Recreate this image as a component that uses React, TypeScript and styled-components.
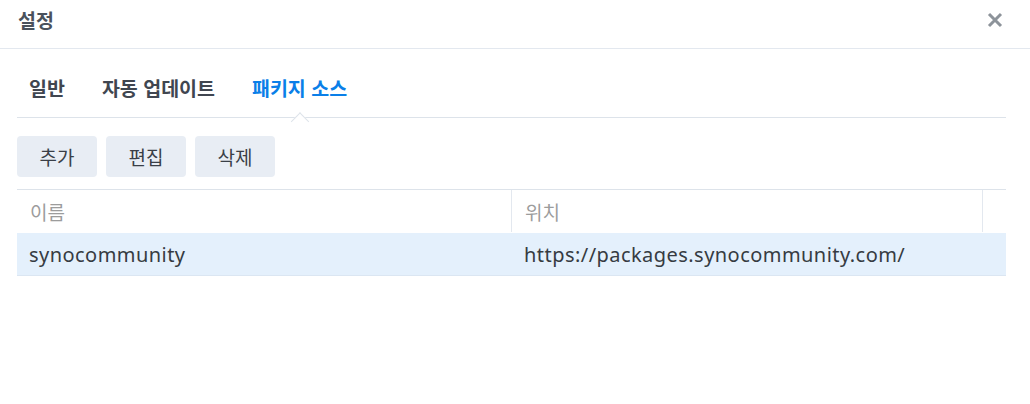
import React from "react";
import styled, { createGlobalStyle } from "styled-components";

const Global = createGlobalStyle`
  html, body { margin: 0; padding: 0; background: #fff; }
  body { font-family: "Noto Sans", "Noto Sans CJK KR", sans-serif; color: #333; }
`;

const Dialog = styled.div`
  width: 1030px;
  height: 404px;
  background: #fff;
  display: flex;
  flex-direction: column;
`;

const Header = styled.div`
  height: 49px;
  box-sizing: border-box;
  border-bottom: 1px solid #e3e8ef;
  display: flex;
  align-items: center;
  justify-content: space-between;
  padding: 0 27px 0 18px;
`;

const Title = styled.div`
  font-family: "Noto Sans CJK KR", sans-serif;
  font-size: 19.5px;
  font-weight: 700;
  color: #4a525c;
  margin-top: -9px;
`;

const CloseButton = styled.button`
  border: none;
  background: transparent;
  padding: 0;
  width: 16px;
  height: 16px;
  display: flex;
  cursor: pointer;
  margin-top: -9px;
`;

const Body = styled.div`
  padding: 0 24px 0 17px;
  display: flex;
  flex-direction: column;
`;

const TabBar = styled.div`
  display: flex;
  gap: 13px;
  height: 69px;
  box-sizing: border-box;
  border-bottom: 1px solid #dde3ea;
  padding-top: 19px;
`;

const Tab = styled.div<{ $active?: boolean }>`
  position: relative;
  padding: 0 12px;
  font-family: "Noto Sans CJK KR", sans-serif;
  font-size: 19.5px;
  font-weight: 700;
  line-height: 40px;
  word-spacing: 1px;
  color: ${(p) => (p.$active ? "#0a7fe8" : "#404650")};
`;

const Notch = styled.span`
  position: absolute;
  left: 50%;
  bottom: -10px;
  width: 13px;
  height: 13px;
  background: #fff;
  border-left: 1px solid #dde3ea;
  border-top: 1px solid #dde3ea;
  transform: translateX(-50%) translateY(1px) rotate(45deg);
  transform-origin: center;
  box-sizing: border-box;
`;

const Toolbar = styled.div`
  display: flex;
  gap: 9px;
  padding-top: 18px;
  padding-bottom: 12px;
`;

const Button = styled.button`
  width: 80px;
  height: 41px;
  border: none;
  border-radius: 4px;
  background: #e8edf4;
  font-family: "Noto Sans CJK KR", sans-serif;
  font-size: 19px;
  color: #3a3f47;
  padding: 0;
  cursor: pointer;
`;

const Table = styled.div`
  border-top: 1px solid #dde3ea;
  display: flex;
  flex-direction: column;
`;

const Row = styled.div<{ $selected?: boolean }>`
  display: grid;
  grid-template-columns: 495px 471px 1fr;
  height: 43px;
  box-sizing: border-box;
  background: ${(p) => (p.$selected ? "#e4f0fc" : "#fff")};
  border-bottom: 1px solid ${(p) => (p.$selected ? "#dbe6f2" : "transparent")};
`;

const HeadCell = styled.div<{ $divider?: boolean }>`
  display: flex;
  align-items: center;
  padding-left: 13px;
  font-family: "Noto Sans CJK KR", sans-serif;
  font-size: 19px;
  color: #9c9c9c;
  border-right: ${(p) => (p.$divider ? "1px solid #e3e8ef" : "none")};
`;

const Cell = styled.div`
  display: flex;
  align-items: center;
  padding-left: 12px;
  font-family: "Noto Sans", "Noto Sans CJK KR", sans-serif;
  font-size: 20px;
  letter-spacing: 0.45px;
  color: #363b42;
`;

export default function App() {
  return (
    <>
      <Global />
      <Dialog>
        <Header>
          <Title>설정</Title>
          <CloseButton aria-label="close">
            <svg width="16" height="16" viewBox="0 0 16 16">
              <path d="M2 2 L14 14 M14 2 L2 14" stroke="#8d939a" strokeWidth="3" strokeLinecap="butt" />
            </svg>
          </CloseButton>
        </Header>
        <Body>
          <TabBar>
            <Tab>일반</Tab>
            <Tab>자동 업데이트</Tab>
            <Tab $active>
              패키지 소스
              <Notch />
            </Tab>
          </TabBar>
          <Toolbar>
            <Button>추가</Button>
            <Button>편집</Button>
            <Button>삭제</Button>
          </Toolbar>
          <Table>
            <Row>
              <HeadCell $divider>이름</HeadCell>
              <HeadCell $divider>위치</HeadCell>
              <HeadCell />
            </Row>
            <Row $selected>
              <Cell>synocommunity</Cell>
              <Cell>https://packages.synocommunity.com/</Cell>
              <Cell />
            </Row>
          </Table>
        </Body>
      </Dialog>
    </>
  );
}
